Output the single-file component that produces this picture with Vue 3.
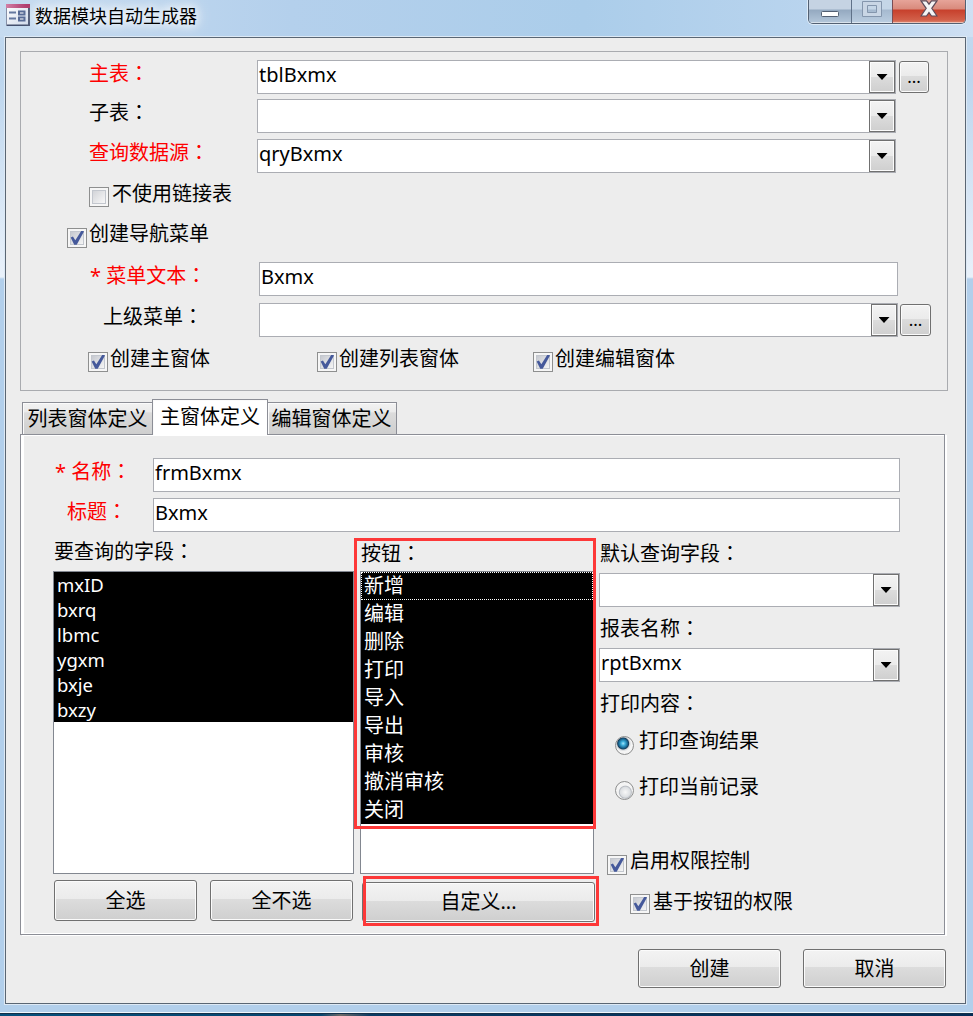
<script setup>
import { ref } from 'vue'

const mainForm = ref(true)
const fields = ['mxID', 'bxrq', 'lbmc', 'ygxm', 'bxje', 'bxzy']
const actions = ['新增', '编辑', '删除', '打印', '导入', '导出', '审核', '撤消审核', '关闭']
const formChecks = [
  { text: '创建主窗体', cls: 'c1' },
  { text: '创建列表窗体', cls: 'c2' },
  { text: '创建编辑窗体', cls: 'c3' },
]
</script>

<template>
  <div class="window">
    <header class="titlebar">
      <svg class="app-icon" width="24" height="22" viewBox="0 0 24 22">
        <defs>
          <linearGradient id="icobg" x1="0" y1="0" x2="1" y2="1">
            <stop offset="0" stop-color="#fff" /><stop offset="1" stop-color="#cfd9ea" />
          </linearGradient>
          <linearGradient id="icotop" x1="0" y1="0" x2="1" y2="0">
            <stop offset="0" stop-color="#d27fa5" /><stop offset="1" stop-color="#a92d62" />
          </linearGradient>
        </defs>
        <rect x=".5" y=".5" width="23" height="21" fill="url(#icobg)" stroke="#8791a8" />
        <path d="M23 4v17.500H1" fill="none" stroke="#44506e" stroke-width="2" />
        <rect width="24" height="4" fill="url(#icotop)" />
        <path d="M3 8.500h7M3 14.500h7" stroke="#6478a0" stroke-width="2" />
        <path d="M13 7.500h5.500v3H13zM13 13.500h5.500v3H13z" fill="#fff" stroke="#566a95" stroke-width="2" />
      </svg>
      <h1 class="title">数据模块自动生成器</h1>
      <div class="win-buttons">
        <span class="wb min"><svg width="18" height="6"><rect x=".5" y=".5" width="17" height="5" rx="1" fill="#fff" stroke="#536073" /></svg></span>
        <span class="wb max"><svg width="20" height="16"><path d="M.5.5h19v15H.5zM5.500 4.500v7h9v-7z" fill="#c9d6e5" fill-rule="evenodd" stroke="#8496ad" /></svg></span>
        <span class="wb close"><svg width="18" height="17" viewBox="0 0 18 17"><path d="M1 .8h5.500L9 4.200 11.500.8H17l-5.200 7.500L17 16h-5.500L9 12.500 6.500 16H1l5.200-7.700z" fill="#f4f4f5" stroke="#5c4a58" stroke-width="1.200" /></svg></span>
      </div>
    </header>

    <main class="client">
      <section class="group">
        <div class="row h39">
          <label class="lbl red">主表<i>：</i></label>
          <div class="combo"><span>tblBxmx</span><b class="drop"></b></div>
          <button class="btn dots">...</button>
        </div>
        <div class="row h40">
          <label class="lbl">子表<i>：</i></label>
          <div class="combo"><span></span><b class="drop"></b></div>
        </div>
        <div class="row h41">
          <label class="lbl red">查询数据源<i>：</i></label>
          <div class="combo"><span>qryBxmx</span><b class="drop"></b></div>
        </div>
        <div class="row h40 unlinked"><b class="chk"></b><span>不使用链接表</span></div>
        <div class="row h42 nav"><b class="chk on"></b><span>创建导航菜单</span></div>
        <div class="row h41">
          <label class="lbl red wide star">* 菜单文本<i>：</i></label>
          <div class="combo"><span>Bxmx</span></div>
        </div>
        <div class="row h42">
          <label class="lbl wide parent">上级菜单<i>：</i></label>
          <div class="combo"><span></span><b class="drop"></b></div>
          <button class="btn dots near">...</button>
        </div>
        <div class="row forms">
          <div v-for="c in formChecks" :key="c.text" class="row" :class="c.cls"><b class="chk on"></b><span>{{ c.text }}</span></div>
        </div>
      </section>

      <nav class="tabs">
        <span class="tab t1">列表窗体定义</span>
        <span class="tab active">主窗体定义</span>
        <span class="tab t3">编辑窗体定义</span>
      </nav>

      <section v-if="mainForm" class="page">
        <div class="row h40">
          <label class="plbl red name">* 名称<i>：</i></label>
          <div class="combo text"><span>frmBxmx</span></div>
        </div>
        <div class="row h40">
          <label class="plbl red">标题<i>：</i></label>
          <div class="combo text"><span>Bxmx</span></div>
        </div>
        <div class="cols">
          <div class="col fields">
            <label>要查询的字段<i>：</i></label>
            <ul class="list"><li v-for="f in fields" :key="f">{{ f }}</li></ul>
            <div class="pair">
              <button class="btn">全选</button>
              <button class="btn">全不选</button>
            </div>
          </div>
          <div class="col actions">
            <label>按钮<i>：</i></label>
            <ul class="list"><li v-for="(a, n) in actions" :key="a" :class="{ focus: n === 0 }">{{ a }}</li></ul>
            <button class="btn custom">自定义...</button>
            <div class="mark mark-list"></div>
            <div class="mark mark-custom"></div>
          </div>
          <div class="col options">
            <label>默认查询字段<i>：</i></label>
            <div class="combo small"><span></span><b class="drop"></b></div>
            <label>报表名称<i>：</i></label>
            <div class="combo small"><span>rptBxmx</span><b class="drop"></b></div>
            <label>打印内容<i>：</i></label>
            <div class="row radio r1"><b class="dot on"></b><span>打印查询结果</span></div>
            <div class="row radio r2"><b class="dot"></b><span>打印当前记录</span></div>
            <div class="row perm"><b class="chk on"></b><span>启用权限控制</span></div>
            <div class="row perm sub"><b class="chk on"></b><span>基于按钮的权限</span></div>
          </div>
        </div>
      </section>

      <footer class="footer">
        <button class="btn">创建</button>
        <button class="btn">取消</button>
      </footer>
    </main>
    <div class="desktop"></div>
  </div>
</template>

<style>
html, body { margin: 0; overflow: hidden; }
</style>

<style scoped>
* { box-sizing: border-box; }
.window {
  width: 973px; height: 1016px; display: flex; flex-direction: column;
  font: 20px/28px "Noto Sans", "Noto Sans CJK SC", sans-serif; color: #000; white-space: nowrap;
  background:
    linear-gradient(#bcd5ee 0, #c6dcf1 90px, #dfeaf6 190px, #eaf1fa 278px, #b2cfeb 279px, #b2cfeb) 0 37px / 100% auto no-repeat,
    #b2cfeb;
  background: linear-gradient(90deg, #c6dbf0, #b4d0ec 30%, #abcdea 60%, #bdd6ef 90%, #cfe0f3) 0 0 / 100% 37px no-repeat,
    linear-gradient(#c4daf0 0, #bdd6ee 80px, #e9f1fa 277px, #b2cfeb 279px, #b2cfeb 100%);
}
i { font-style: normal; font-family: "Noto Sans CJK TC", sans-serif; line-height: 1; }
b { font-weight: normal; flex: none; display: block; }
.titlebar { height: 36px; display: flex; align-items: flex-start; flex: none; }
.app-icon { margin: 4px 0 0 6px; }
.title {
  margin: 2px 0 0 5px; font-size: 18px; font-weight: 400; line-height: 28px;
  text-shadow: 0 0 8px #fff, 0 0 12px #fff, 0 0 18px #fff;
}
.win-buttons {
  margin: 0 7px 0 auto; display: flex; width: 158px; height: 24px; overflow: hidden;
  border: 1px solid #536173; border-top: 0; border-radius: 0 0 5px 5px; box-shadow: 0 0 0 1px #dfecf8;
}
.wb { display: flex; justify-content: center; align-items: flex-start; height: 23px; box-shadow: inset 0 -1px #ffffff80; }
.min { width: 43px; background: linear-gradient(#c5d3e3 0 9px, #94a9c0 10px, #b4c7da); border-right: 1px solid #5f7188; padding-top: 11px; }
.max { width: 41px; background: linear-gradient(#c5d6e7 0 9px, #a5b9cf 10px, #bbcee1); border-right: 1px solid #7a4d54; padding-top: 1px; }
.close { width: 72px; background: linear-gradient(#e6a499 0, #d98a7c 9px, #c7402c 10px, #d2604a 20px, #e08b74); }
.client {
  width: 961px; height: 967px; flex: none; margin: 1px 0 0 5px; background: #ededed;
  border: 1px solid #5a6673; box-shadow: 0 0 0 1px #dde9f5; display: flex; flex-direction: column;
}
.group { width: 928px; height: 340px; margin: 13px 0 0 14px; border: 1px solid #a9abaf; padding-top: 8px; flex: none; }
.row { display: flex; align-items: flex-start; }
.h39 { height: 39px; } .h40 { height: 40px; } .h41 { height: 41px; } .h42 { height: 42px; }
.red { color: #fe0000; }
.lbl { width: 236px; padding-left: 68px; flex: none; }
.wide { width: 238px; }
.star { padding-left: 69px; }
.parent { padding-left: 82px; }
.combo {
  width: 639px; height: 34px; background: #fff; border: 1px solid #abadb3; flex: none;
  display: flex; justify-content: space-between;
}
.combo span { padding-left: 1px; }
.drop {
  width: 26px; height: 32px; border: 1px solid #707070; display: grid; place-items: center;
  background: linear-gradient(#f3f3f3, #ebebeb 50%, #dcdcdc 50%, #cfcfcf); box-shadow: inset 0 0 0 1px #fbfbfb;
}
.drop::after { content: ""; width: 11px; height: 6px; background: #000; clip-path: polygon(0 0, 100% 0, 50% 100%); }
.btn {
  width: 143px; height: 41px; padding: 0; font: inherit; color: #000; border: 1px solid #707070; border-radius: 3px;
  background: linear-gradient(#f3f3f3, #ebebeb 47%, #dcdcdc 47%, #cfcfcf); box-shadow: inset 0 0 0 1px #fbfbfb; flex: none;
}
.dots { width: 30px; height: 32px; margin: 1px 0 0 3px; font-size: 17px; line-height: 28px; }
.near { margin-left: 2px; width: 31px; }
.chk {
  width: 20px; height: 20px; margin-top: 7px; border: 1px solid #8e8f8f; display: grid; place-items: center;
  background: linear-gradient(135deg, #c6c9d0, #f5f5f5) 3px 3px / 12px 12px no-repeat, #f4f4f4;
  box-shadow: inset 0 0 0 1px #f6f6f6, inset 0 0 0 2px #f6f6f6, inset 0 0 0 3px #c3c7ce;
}
.chk::after { content: ""; width: 12px; height: 12px; background: linear-gradient(135deg, #d2d4d8, #f8f8f8); }
.chk.on::after {
  width: 14px; height: 14px;
  background: #45599b;
  clip-path: polygon(5% 46%, 21% 40%, 38% 66%, 80% 0, 98% 0, 98% 8%, 48% 98%, 30% 98%);
}
.chk + span { margin-left: 2px; }
.unlinked { padding-left: 68px; }
.unlinked span { margin-left: 3px; }
.nav { padding-left: 46px; }
.nav .chk { margin-top: 8px; }
.c1 { padding-left: 67px; width: 296px; }
.c2 { width: 216px; }
.tabs { display: flex; align-items: flex-end; height: 35px; margin: 9px 0 0 16px; flex: none; position: relative; z-index: 1; }
.tab {
  height: 33px; margin-bottom: 0; border: 1px solid #8c8e96; line-height: 32px; text-align: center;
  background: linear-gradient(#f2f2f2, #ebebeb 30%, #dcdcdc 31%, #cfcfcf); box-shadow: inset 1px 1px #fbfbfb;
}
.t1 { width: 131px; }
.t3 { width: 130px; margin-left: -1px; padding-right: 1px; }
.active { width: 116px; height: 36px; margin-left: -1px; background: #fff; border-bottom: 0; line-height: 33px; }
.page {
  width: 925px; height: 501px; margin: -1px 0 0 14px; border: 1px solid #8c8e96; flex: none; padding-top: 23px;
  box-shadow: inset 3px 0 #fff, inset 0 1px #fff, inset 0 -1px #fff, 2px 1px #fff;
}
.plbl { width: 132px; padding-left: 46px; flex: none; }
.name { padding-left: 34px; }
.text { width: 747px; }
.cols { display: flex; padding-left: 32px; }
.col { display: flex; flex-direction: column; position: relative; flex: none; }
.fields { width: 301px; margin-right: 6px; }
.fields label { padding-left: 1px; height: 33px; }
.list { margin: 0; padding: 0; list-style: none; height: 303px; background: #fff; border: 1px solid #828790; }
.list li { background: #000; color: #fff; height: 25px; line-height: 25px; font-size: 18.500px; padding-left: 3px; }
.pair { display: flex; gap: 13px; margin: 6px 0 0 1px; }
.actions { width: 234px; margin-right: 5px; }
.actions label { padding: 2px 0 0 1px; height: 33px; }
.actions li { height: 28px; line-height: 28px; font-size: 20px; }
.focus { outline: 1px dotted #fff; outline-offset: -1px; }
.custom { width: 233px; height: 40px; margin: 8px 0 0 2px; }
.mark { position: absolute; border: 3px solid #fd3838; }
.mark-list { left: -6px; top: 0; width: 242px; height: 291px; }
.mark-custom { left: 3px; top: 338px; width: 236px; height: 50px; }
.options { width: 301px; padding-top: 2px; }
.options label { padding-left: 1px; height: 33px; }
.small { width: 301px; margin-bottom: 8px; }
.options .small { height: 34px; }
.radio { height: 46px; padding-left: 16px; }
.r1 { margin-top: 4px; }
.radio span { margin-left: 5px; }
.dot {
  width: 19px; height: 19px; margin-top: 9px; border-radius: 50%; border: 1px solid #8e8f8f;
  background: radial-gradient(circle at 55% 60%, #f8f8f8 0, #dcdfe2 5px, #b9bdc3 6px, #f4f4f4 7px);
}
.r2 .dot { margin-top: 8px; }
.dot.on { background: radial-gradient(circle at 42% 38%, #a5e4fa 0, #3eb0dc 2px, #12557f 5px, #1a3c57 5.500px, #d3d6da 6.500px, #f4f4f4 8px); }
.perm { height: 41px; padding-left: 8px; margin-top: 28px; }
.perm .chk { margin-top: 8px; }
.perm span { margin-left: 3px; }
.sub { margin-top: 0; padding-left: 31px; }
.sub .chk { margin-top: 6px; }
.footer { display: flex; gap: 22px; margin: 14px 0 0 632px; }
.footer .btn { height: 39px; }
.desktop { margin-top: auto; height: 4px; flex: none; border-top: 1px solid #f2f7fc; background: linear-gradient(#12304a 1px, transparent 1px), linear-gradient(90deg, #07507c, #07456f 33%, #6e6a68 35%, #0a3b64 38%, #042c56); }
</style>
